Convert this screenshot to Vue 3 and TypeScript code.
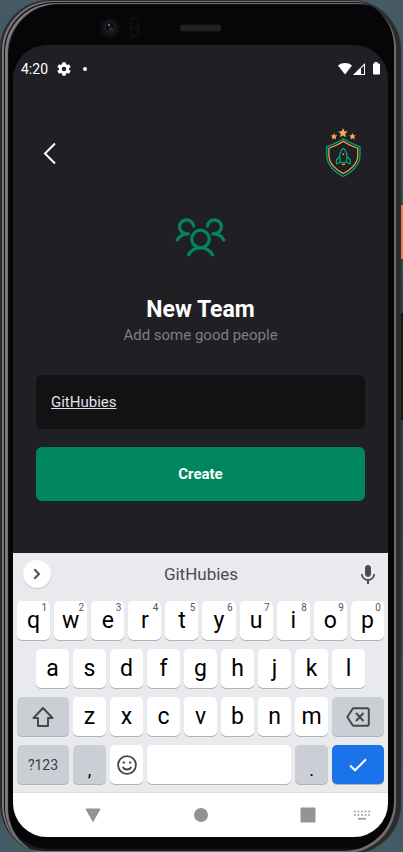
<script setup lang="ts">
import { ref } from 'vue'

interface Key {
  label: string
  hint?: string
}

const teamName = ref<string>('GitHubies')

const toKeys = (letters: string): Key[] => letters.split('').map((label) => ({ label }))

const topRow: Key[] = toKeys('qwertyuiop').map((key, i) => ({ ...key, hint: String((i + 1) % 10) }))
const homeRow: Key[] = toKeys('asdfghjkl')
const bottomRow: Key[] = toKeys('zxcvbnm')

const press = (key: string): void => {
  teamName.value += key
}

const erase = (): void => {
  teamName.value = teamName.value.slice(0, -1)
}
</script>

<template>
  <div class="stage">
    <span class="side-button power"></span>
    <span class="side-button volume"></span>
    <div class="phone">
      <div class="bezel">
        <svg class="sensors" width="124" height="24" viewBox="0 0 124 24" aria-hidden="true">
          <circle cx="10" cy="13" r="9.500" fill="#111113" />
          <circle cx="10" cy="12" r="6" fill="#1c1c20" />
          <circle cx="10" cy="12" r="4" fill="#0b0b10" />
          <circle cx="11" cy="14" r="2" fill="#2b2d4c" />
          <circle cx="9" cy="10" r="1" fill="#8a8a90" />
          <rect x="30" y="3" width="9" height="19" rx="4" fill="#0c0c0d" stroke="#131314" />
          <circle cx="34.500" cy="7.500" r="3" fill="#070708" />
          <circle cx="34.500" cy="17.500" r="3" fill="#070708" />
          <rect x="80" y="10" width="41" height="6" rx="2" fill="#232323" stroke="#1a1a1a" />
        </svg>
      </div>

      <div class="screen">
        <main class="app">
          <div class="status">
            <span class="clock">4:20</span>
            <svg width="14" height="14" viewBox="2 2 20 20" fill="#fff" aria-hidden="true">
              <path d="M19.140 12.940c.04-.3.06-.61.06-.94s-.02-.64-.07-.94l2.030-1.580c.18-.14.23-.41.12-.61l-1.920-3.320c-.12-.22-.37-.29-.59-.22l-2.390.96c-.5-.38-1.030-.7-1.620-.94l-.36-2.540c-.04-.24-.24-.41-.48-.41h-3.840c-.24 0-.43.17-.47.41l-.36 2.540c-.59.24-1.130.57-1.620.94l-2.390-.96c-.22-.08-.47 0-.59.22L2.740 8.870c-.12.21-.08.47.12.61l2.030 1.580c-.05.3-.09.63-.09.94s.02.64.07.94l-2.030 1.580c-.18.14-.23.41-.12.61l1.920 3.320c.12.22.37.29.59.22l2.390-.96c.5.38 1.030.7 1.620.94l.36 2.540c.05.24.24.41.48.41h3.840c.24 0 .44-.17.47-.41l.36-2.540c.59-.24 1.130-.56 1.620-.94l2.390.96c.22.08.47 0 .59-.22l1.920-3.320c.12-.22.07-.47-.12-.61l-2.010-1.580zM12 15.200a3.200 3.200 0 1 1 0-6.400 3.200 3.200 0 0 1 0 6.400z" />
            </svg>
            <span class="dot"></span>
            <svg class="signals" width="42" height="14" viewBox="0 0 42 14" fill="#fff" aria-hidden="true">
              <path d="M0 3.500C4 .2 10 .2 14 3.500L7 12.500z" />
              <path d="M27 1V13H15z" />
              <path d="M23 6.500L26 3.500V12H23z" fill="#202024" />
              <path d="M36.500 0h3v1.500H41a1 1 0 0 1 1 1V11.500a1 1 0 0 1-1 1H36a1 1 0 0 1-1-1V2.500a1 1 0 0 1 1-1h.5z" />
            </svg>
          </div>

          <header class="header">
            <button class="back" type="button" aria-label="Back">
              <svg width="14" height="24" viewBox="0 0 14 24" fill="none" stroke="#fff" stroke-width="2">
                <path d="M12 2.500L2 12.500L12 22.500" />
              </svg>
            </button>
            <svg width="38" height="52" viewBox="0 0 38 52" fill="none" aria-hidden="true">
              <g fill="#fba94c">
                <path d="M19 1l1.400 3.200 3.400.3-2.600 2.300.8 3.400L19 8.400l-3 1.800.8-3.400-2.600-2.300 3.400-.3z" />
                <path d="M10 6l1 2.300 2.400.2-1.800 1.600.5 2.400-2.100-1.300-2.100 1.300.5-2.400-1.800-1.600 2.400-.2z" />
                <path d="M28.500 6l1 2.300 2.400.2-1.800 1.600.5 2.400-2.100-1.300-2.100 1.300.5-2.400-1.800-1.600 2.400-.2z" />
              </g>
              <path d="M19.300 11.800C14.500 15.300 9 17.500 2.800 19.800V28.500C2.800 38 11 45.500 19.300 49.500C27.600 45.500 36 38 36 28.500V19.800C30 17.500 24 15.300 19.300 11.800Z" stroke="#00a870" stroke-width="1.300" />
              <path d="M19.300 14.200C15 17.400 10 19.400 4.900 21.200V28.500C4.900 36.500 12 43 19.300 46.500C26.600 43 33.800 36.500 33.800 28.500V21.200C29 19.400 23.500 17.400 19.300 14.200Z" stroke="#fba94c" stroke-width="1.200" />
              <g stroke="#00a870" stroke-width="1.200" stroke-linejoin="round">
                <path d="M19.300 21.200C15.500 24 15 29.500 16.500 35.500H22.100C23.600 29.500 23.100 24 19.300 21.200Z" />
                <path d="M15.500 29.500L12.500 33V37L16.500 35M23.100 29.500L26.200 33V37L22.100 35" />
              </g>
              <path d="M18.500 26.500h1.600v1.600h-1.600zM17.800 36.800h3.200v1.300h-3.200z" fill="#fba94c" />
            </svg>
          </header>

          <section class="intro">
            <svg width="52" height="40" viewBox="0 0 52 40" fill="none" stroke="#00875f" stroke-width="3.200" stroke-linecap="round" aria-hidden="true">
              <circle cx="25.500" cy="21" r="8.800" />
              <path d="M13.600 36.700C18.700 27.700 32.300 27.700 37.400 36.700" />
              <path d="M18.600 8.200A7 7 0 1 0 11.800 15.800H13.200M11.500 15.900C7.500 16.300 4.500 18.300 2.300 21.800" />
              <path d="M32.400 8.200A7 7 0 1 1 39.200 15.800H37.800M39.500 15.900C43.500 16.300 46.500 18.300 48.700 21.800" />
            </svg>
            <h1>New Team</h1>
            <p>Add some good people</p>
          </section>

          <form class="form" @submit.prevent>
            <input v-model="teamName" type="text" aria-label="Team name" spellcheck="false" />
            <button type="submit">Create</button>
          </form>
        </main>

        <section class="keyboard" aria-label="Keyboard">
          <div class="suggestions">
            <button class="expand" type="button" aria-label="More">
              <svg width="8" height="12" viewBox="0 0 8 12" fill="none" stroke="#505154" stroke-width="2">
                <path d="M1.300 1.300L6 6L1.300 10.700" />
              </svg>
            </button>
            <button class="suggestion" type="button">GitHubies</button>
            <button class="voice" type="button" aria-label="Voice input">
              <svg width="14" height="19" viewBox="5 2 14 19" fill="#4b4c4f">
                <path d="M12 14c1.660 0 3-1.340 3-3V5c0-1.660-1.340-3-3-3S9 3.340 9 5v6c0 1.660 1.340 3 3 3zm5.300-3c0 3-2.540 5.100-5.300 5.100S6.700 14 6.700 11H5c0 3.410 2.720 6.230 6 6.720V21h2v-3.280c3.280-.48 6-3.300 6-6.720h-1.700z" />
              </svg>
            </button>
          </div>

          <div class="row">
            <button v-for="key in topRow" :key="key.label" class="key" type="button" @click="press(key.label)">
              {{ key.label }}<span class="hint">{{ key.hint }}</span>
            </button>
          </div>
          <div class="row home">
            <button v-for="key in homeRow" :key="key.label" class="key" type="button" @click="press(key.label)">{{ key.label }}</button>
          </div>
          <div class="row">
            <button class="key wide grey" type="button" aria-label="Shift">
              <svg width="22" height="22" viewBox="0 0 22 22" fill="none" stroke="#47484b" stroke-width="2" stroke-linejoin="round">
                <path d="M11 2L20.500 12H16V20H6V12H1.500Z" />
              </svg>
            </button>
            <button v-for="key in bottomRow" :key="key.label" class="key" type="button" @click="press(key.label)">{{ key.label }}</button>
            <button class="key wide grey" type="button" aria-label="Delete" @click="erase">
              <svg width="24" height="20" viewBox="0 0 24 20" fill="none" stroke="#47484b" stroke-width="2" stroke-linejoin="round">
                <path d="M7 1.300H21.200Q22.800 1.300 22.800 3V17Q22.800 18.700 21.200 18.700H7L1.300 10ZM10 6L17.500 14M17.500 6L10 14" />
              </svg>
            </button>
          </div>
          <div class="row">
            <button class="key wide grey symbols" type="button">?123</button>
            <button class="key narrow grey mark" type="button" @click="press(',')">,</button>
            <button class="key narrow" type="button" aria-label="Emoji">
              <svg width="20" height="20" viewBox="0 0 20 20" fill="none" stroke="#444548" stroke-width="1.800">
                <circle cx="10" cy="10" r="8.900" />
                <path d="M5.700 12C7.500 15.300 12.500 15.300 14.300 12" />
                <path d="M5.700 7.500h2.200M12.100 7.500h2.200" stroke-width="2.200" />
              </svg>
            </button>
            <button class="key space" type="button" aria-label="Space" @click="press(' ')"></button>
            <button class="key narrow grey mark" type="button" @click="press('.')">.</button>
            <button class="key wide enter" type="button" aria-label="Done">
              <svg width="18" height="14" viewBox="0 0 18 14" fill="none" stroke="#fff" stroke-width="2">
                <path d="M1 7.500L6 12.300L17 1.300" />
              </svg>
            </button>
          </div>
        </section>

        <nav class="nav">
          <button type="button" aria-label="Hide keyboard">
            <svg width="16" height="15" viewBox="0 0 16 15" fill="#939393" stroke="#939393" stroke-linejoin="round">
              <path d="M1 1H15L8 13.500Z" />
            </svg>
          </button>
          <button type="button" aria-label="Home">
            <svg width="14" height="14" viewBox="0 0 14 14"><circle cx="7" cy="7" r="7" fill="#939393" /></svg>
          </button>
          <button type="button" aria-label="Recent apps">
            <svg width="16" height="16" viewBox="0 0 16 16"><rect x=".5" y=".5" width="15" height="15" rx="1" fill="#939393" /></svg>
          </button>
          <button class="switcher" type="button" aria-label="Switch keyboard">
            <svg width="16" height="10" viewBox="0 0 16 10" stroke="#939393" stroke-width="1.500">
              <path d="M0 1.500H16M0 5H16" stroke-dasharray="1.700 1.850" />
              <path d="M4 8.700H12" />
            </svg>
          </button>
        </nav>
      </div>
    </div>
  </div>
</template>

<style>
body {
  background: #3d525e;
}
</style>

<style scoped>
* {
  box-sizing: border-box;
}

.stage {
  position: relative;
  display: flex;
  height: 100vh;
  min-height: 700px;
  overflow: hidden;
  padding-right: 2px;
  background: linear-gradient(#455b66, #29423f 40%, #29423f 60%, #455b66);
  font-family: Roboto, "Noto Sans", sans-serif;
}

button {
  padding: 0;
  border: 0;
  background: none;
  font-family: inherit;
}

svg {
  display: block;
  flex: none;
}

.side-button {
  position: absolute;
  right: 0;
  width: 3px;
}

.power {
  top: 205px;
  height: 54px;
  background: #e87858;
}

.volume {
  top: 313px;
  height: 107px;
  background: #171919;
}

.phone {
  position: relative;
  display: flex;
  flex-direction: column;
  flex: 1;
  min-width: 0;
  margin-bottom: -2px;
  padding: 0 13px 17px;
  border-radius: 50px;
  background: #060608;
  box-shadow:
    inset 2px 1px 0 #2b2b2d,
    inset -5px -1px 0 #2b2b2c,
    inset 4px 2px 0 #77777a,
    inset -7px -3px 0 #6e6e6e,
    inset 5px 3px 0 #101011,
    inset 8px 4px 1px #7c7c7e,
    inset 0 -5px 2px #202022;
}

.bezel {
  flex: none;
  display: flex;
  justify-content: center;
  height: 45px;
  padding-top: 15px;
}

.bezel .sensors {
  margin-right: 77px;
}

.screen {
  display: flex;
  flex: 1;
  flex-direction: column;
  min-height: 0;
  overflow: hidden;
  border-radius: 34px;
  background: #202024;
}

.app {
  flex: 1;
  padding: 0 23px;
}

.status {
  display: flex;
  align-items: center;
  height: 48px;
  margin: 0 -15px;
  color: #fff;
  font-size: 14px;
}

.clock {
  width: 36px;
}

.dot {
  width: 4px;
  height: 4px;
  margin-left: 12px;
  border-radius: 50%;
  background: #fff;
}

.signals {
  margin-left: auto;
}

.header {
  display: flex;
  align-items: center;
  justify-content: space-between;
  height: 64px;
  margin-top: 28px;
  padding: 0 3px 0 7px;
}

.back {
  display: flex;
}

.intro {
  display: flex;
  flex-direction: column;
  align-items: center;
  margin-top: 33px;
  text-align: center;
}

.intro h1 {
  margin: 38px 0 0;
  color: #fff;
  font-size: 23px;
  font-weight: 700;
  line-height: 28px;
}

.intro p {
  margin: 0;
  color: #7c7c8a;
  font-size: 15px;
  line-height: 22px;
}

.form {
  display: flex;
  flex-direction: column;
  gap: 18px;
  margin-top: 29px;
}

.form input,
.form button {
  width: 100%;
  height: 54px;
  border: 0;
  border-radius: 6px;
  color: #fff;
  font-family: inherit;
  font-size: 15px;
}

.form input {
  padding: 0 15px;
  outline: none;
  background: #121214;
  color: #e1e1e6;
  text-decoration: underline;
}

.form button {
  background: #00875f;
  font-weight: 700;
}

.keyboard {
  display: flex;
  flex: none;
  flex-direction: column;
  gap: 9px;
  padding: 0 4px 6px;
  background: #e8eaed;
}

.suggestions {
  display: grid;
  grid-template-columns: 40px 1fr 40px;
  align-items: center;
  height: 39px;
  padding: 3px 5px 0 6px;
}

.expand {
  display: flex;
  align-items: center;
  justify-content: center;
  width: 28px;
  height: 28px;
  border-radius: 50%;
  background: #fff;
  box-shadow: 0 1px 1px #bfc1c5;
}

.suggestion {
  color: #4b4c4f;
  font-size: 17px;
}

.voice {
  display: flex;
  justify-content: flex-end;
  padding-right: 4px;
}

.row {
  display: flex;
  gap: 4px;
}

.row:last-child {
  padding-bottom: 2px;
}

.home {
  padding: 0 19px;
}

.key {
  position: relative;
  display: flex;
  flex: 1 1 0;
  align-items: center;
  justify-content: center;
  min-width: 0;
  height: 39px;
  border-radius: 5px;
  background: #fff;
  box-shadow: 0 1px 0 #b0b2b6;
  color: #000;
  font-size: 23px;
  line-height: 26px;
}

.hint {
  position: absolute;
  top: 1px;
  right: 3px;
  color: #55565a;
  font-size: 10px;
  line-height: 12px;
}

.key.grey {
  background: #cbced5;
}

.key.wide {
  flex: 0 0 52px;
}

.key.narrow {
  flex: 0 0 33px;
}

.key.symbols {
  color: #3c3d40;
  font-size: 14px;
}

.key.mark {
  padding-top: 10px;
  font-size: 18px;
}

.key.enter {
  background: #1a73e8;
}

.nav {
  position: relative;
  display: flex;
  flex: none;
  align-items: center;
  justify-content: space-between;
  height: 45px;
  padding: 0 72px;
  border-top: 1px solid #dcdcde;
  background: #fff;
}

.switcher {
  position: absolute;
  right: 18px;
}
</style>
